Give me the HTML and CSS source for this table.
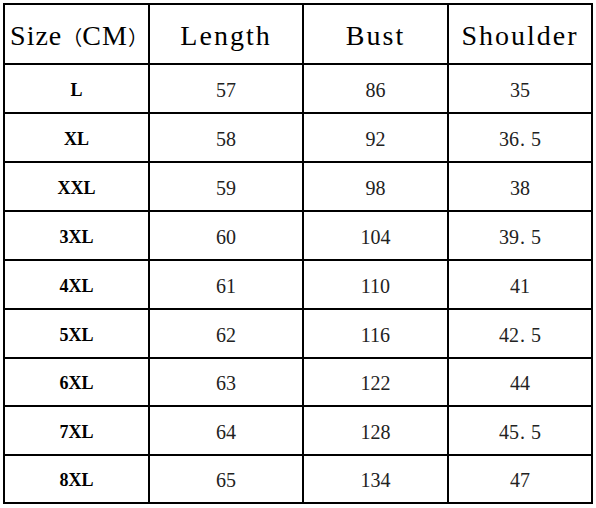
FILE: index.html
```html
<!DOCTYPE html>
<html lang="en">
<head>
<meta charset="utf-8">
<title>Size chart</title>
<link rel="stylesheet" href="styles.css">
</head>
<body>
<div class="sheet">
  <div class="cell head first">Size<span class="paren">（</span>CM<span class="paren">）</span></div>
  <div class="cell head">Length</div>
  <div class="cell head">Bust</div>
  <div class="cell head">Shoulder</div>

  <div class="cell size">L</div><div class="cell num">57</div><div class="cell num">86</div><div class="cell num">35</div>
  <div class="cell size">XL</div><div class="cell num">58</div><div class="cell num">92</div><div class="cell num">36<span class="dot">.</span>5</div>
  <div class="cell size">XXL</div><div class="cell num">59</div><div class="cell num">98</div><div class="cell num">38</div>
  <div class="cell size">3XL</div><div class="cell num">60</div><div class="cell num">104</div><div class="cell num">39<span class="dot">.</span>5</div>
  <div class="cell size">4XL</div><div class="cell num">61</div><div class="cell num">110</div><div class="cell num">41</div>
  <div class="cell size">5XL</div><div class="cell num">62</div><div class="cell num">116</div><div class="cell num">42<span class="dot">.</span>5</div>
  <div class="cell size">6XL</div><div class="cell num">63</div><div class="cell num">122</div><div class="cell num">44</div>
  <div class="cell size">7XL</div><div class="cell num">64</div><div class="cell num">128</div><div class="cell num">45<span class="dot">.</span>5</div>
  <div class="cell size">8XL</div><div class="cell num">65</div><div class="cell num">134</div><div class="cell num">47</div>
</div>
</body>
</html>
```
FILE: styles.css
```css
html, body {
  margin: 0;
  padding: 0;
  background: #ffffff;
}

body {
  width: 596px;
  height: 508px;
  overflow: hidden;
  font-family: "Liberation Serif", "Noto Sans CJK SC", serif;
  color: #111;
}

.sheet {
  display: grid;
  grid-template-columns: 143px 152px 143px 142px;
  grid-template-rows: 58px 47px 47px 47px 47px 47px 47px 46px 47px 46px;
  gap: 2px;
  padding: 2px;
  background: #000;
  width: max-content;
  margin: 3px 0 0 3px;
}

.cell {
  background: #fff;
  display: flex;
  align-items: center;
  justify-content: center;
  white-space: nowrap;
}

.head {
  font-size: 28px;
  letter-spacing: 2px;
  color: #000;
  padding-top: 4px;
}

.head.first {
  letter-spacing: 1px;
  padding-left: 5px;
}

.paren {
  font-family: "Noto Sans CJK SC", sans-serif;
  font-size: 20px;
  letter-spacing: 0;
}

.size {
  font-size: 18px;
  font-weight: bold;
  color: #000;
  padding-top: 3px;
}

.num {
  font-size: 20px;
  color: #222;
  padding-top: 3px;
}

.dot {
  margin-left: 1px;
  margin-right: 6px;
}
```
